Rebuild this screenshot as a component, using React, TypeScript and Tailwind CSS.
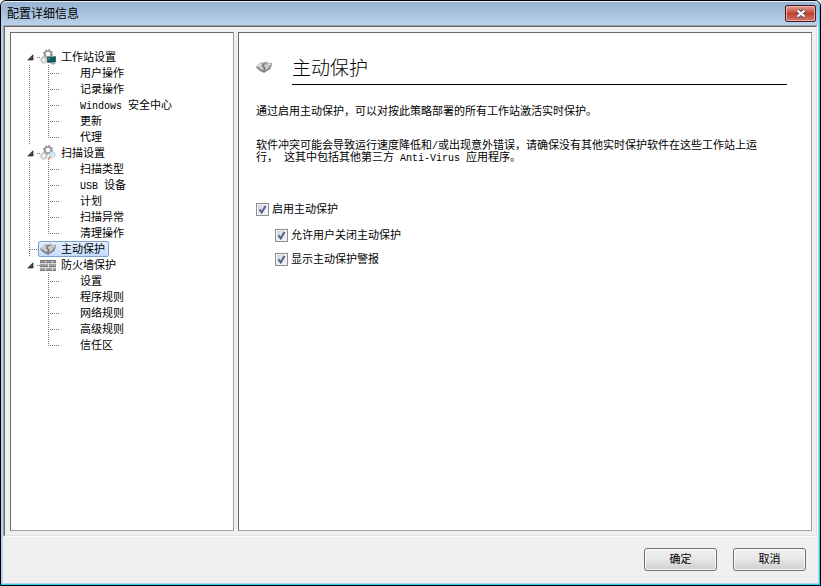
import React from "react";

type Group = {
  label: string;
  icon: React.ReactNode;
  items: string[];
  selected?: boolean;
};

const GearPair = () => (
  <>
    <circle cx="8" cy="5" r="3.2" fill="none" stroke="#9a9a9a" strokeWidth="1.8" />
    <circle cx="8" cy="5" r="4.4" fill="none" stroke="#8a8a8a" strokeWidth="1.2" strokeDasharray="1.7 1.75" />
    <circle cx="3.8" cy="11" r="2.4" fill="#fff" stroke="#c8c8c8" strokeWidth="1.5" />
    <circle cx="3.8" cy="11" r="3.4" fill="none" stroke="#c0c0c0" strokeWidth="1" strokeDasharray="1.3 1.4" />
  </>
);

const WorkstationIcon = () => (
  <svg className="size-4 shrink-0" viewBox="0 0 16 16" aria-hidden="true">
    <GearPair />
    <path d="M7.5 8.5 15.5 7.5V13l-8 .5z" fill="#14595f" stroke="#0c3f46" strokeWidth=".6" />
    <path d="M8 9l4-.6-4 3z" fill="#2e8c8c" />
    <path d="M10 14.2l5-.7.5 1.5-3 .8z" fill="#9aa4a6" />
  </svg>
);

const ScanIcon = () => (
  <svg className="size-4 shrink-0" viewBox="0 0 16 16" aria-hidden="true">
    <GearPair />
    <circle cx="12.3" cy="9.6" r="2.9" fill="#cdeaf8" stroke="#a9cfe4" strokeWidth=".8" />
    <path d="M10.2 11.8 8 14.6" stroke="#c98a5c" strokeWidth="1.6" />
  </svg>
);

const ShieldIcon = () => (
  <svg className="size-4 shrink-0" viewBox="0 0 16 16" aria-hidden="true">
    <path
      d="M0 8.3 3 5.2 6.2 3.6 8 4.2 10 2.8l2.3 1.5L16 4.3l-1 3-1.2 2.8L11 11.5 8.2 13.5 5 12.3 2.5 10.5z"
      fill="#bdbdbd"
      stroke="#8e8e8e"
      strokeWidth=".7"
    />
    <path d="M2 8.5 4.5 11l3.5 1.8 2.5-1.6 3-1.7 1.3-3" fill="none" stroke="#7b7b7b" strokeWidth="1.2" />
    <path d="M2 7.3 4 5.7l2-.8M12 5.3l2.5-.2" fill="none" stroke="#e6e6e6" strokeWidth="1.1" />
    <path d="M9.8 4.8C6.5 4.5 5.5 7 7.8 8c2 .9 1.5 2.7-.8 3" fill="none" stroke="#686868" strokeWidth="1.2" />
    <path d="M11 6c-1.5 0-2 .8-1 1.7s.8 2-.3 2.7M5.3 6.5c-.8 1.2-.6 2.5.5 3.5" fill="none" stroke="#ececec" strokeWidth=".9" />
  </svg>
);

const WallIcon = () => (
  <svg className="size-4 shrink-0" viewBox="0 0 16 16" aria-hidden="true">
    <rect y="3" width="16" height="11" fill="#dcdcdc" />
    <path d="M0 3h5v3H0zM6 3h6v3H6zM13 3h3v3h-3zM0 7h8v3H0zM9 7h7v3H9zM0 11h5v3H0zM6 11h6v3H6zM13 11h3v3h-3z" fill="#a2a2a2" />
    <path d="M0 5.5h5M6 5.5h6M13 5.5h3M0 9.5h8M9 9.5h7M0 13.5h5M6 13.5h6M13 13.5h3M0 3.5h16" stroke="#757575" />
  </svg>
);

const groups: Group[] = [
  {
    label: "工作站设置",
    icon: <WorkstationIcon />,
    items: ["用户操作", "记录操作", "Windows 安全中心", "更新", "代理"],
  },
  {
    label: "扫描设置",
    icon: <ScanIcon />,
    items: ["扫描类型", "USB 设备", "计划", "扫描异常", "清理操作"],
  },
  { label: "主动保护", icon: <ShieldIcon />, items: [], selected: true },
  {
    label: "防火墙保护",
    icon: <WallIcon />,
    items: ["设置", "程序规则", "网络规则", "高级规则", "信任区"],
  },
];

// Latin runs use a half-width face next to the Chinese text
const Mixed = ({ text }: { text: string }) => (
  <>
    {text.split(/([\x20-\x7e]+)/).map((part, i) =>
      i % 2 ? (
        <span key={i} className="font-['Liberation_Mono',monospace] text-[10px] leading-[8px] whitespace-pre-wrap">
          {part}
        </span>
      ) : (
        part
      )
    )}
  </>
);

const dotsDown = "w-px shrink-0 bg-[repeating-linear-gradient(to_bottom,#777_0_1px,transparent_1px_2px)]";
const dotsAcross = "h-px shrink-0 bg-[repeating-linear-gradient(to_right,#777_0_1px,transparent_1px_2px)]";

const TreeGroup = ({ group, last }: { group: Group; last: boolean }) => {
  if (group.selected) {
    return (
      <li className="flex h-4 items-center pl-[17px]">
        <span className={`${dotsDown} h-4`} />
        <span className={`${dotsAcross} w-2`} />
        <a
          href="#protection"
          className="flex h-4 items-center gap-[5px] rounded-xs border border-[#7da2ce] bg-linear-to-b from-[#e4effd] to-[#c4dcfb] pr-[3px] pl-px"
        >
          {group.icon}
          {group.label}
        </a>
      </li>
    );
  }
  return (
    <li>
      <div className="flex h-4 items-center pl-[15px]">
        <button aria-label={group.label} className="w-[7px] shrink-0">
          <svg className="size-[7px]" viewBox="0 0 7 7" aria-hidden="true">
            <path d="M6 .8v5.2H.8z" fill="#444" stroke="#222" strokeWidth=".7" />
          </svg>
        </button>
        <span className={`${dotsAcross} ml-[3px] w-[3px]`} />
        <a href="#group" className="flex items-center gap-[5px]">
          {group.icon}
          {group.label}
        </a>
      </div>
      <ul>
        {group.items.map((item, i) => (
          <li key={item} className="flex h-4 pl-[17px]">
            <span className={last ? "w-px" : `${dotsDown} h-4`} />
            <span className={`${dotsDown} ml-[18px] ${i === group.items.length - 1 ? "h-[9px]" : "h-4"}`} />
            <span className={`${dotsAcross} mt-2 ml-px w-[10px]`} />
            <a href="#item" className="ml-5 leading-4 whitespace-nowrap">
              <Mixed text={item} />
            </a>
          </li>
        ))}
      </ul>
    </li>
  );
};

const Check = ({ label }: { label: string }) => (
  <label className="flex items-center gap-[3px] leading-4">
    <span className="grid size-[13px]">
      <input
        type="checkbox"
        defaultChecked
        className="peer col-start-1 row-start-1 size-[13px] appearance-none border border-[#8e8f8f] bg-linear-to-br from-[#cfd3da] to-[#f6f6f6] shadow-[inset_0_0_0_1px_#f4f4f4]"
      />
      <svg
        className="pointer-events-none invisible col-start-1 row-start-1 size-[13px] peer-checked:visible"
        viewBox="0 0 13 13"
        aria-hidden="true"
      >
        <path d="M3.5 6.3 5.7 9.5 9.5 3" fill="none" stroke="#4a5f97" strokeWidth="1.9" />
      </svg>
    </span>
    {label}
  </label>
);

const DialogButton = ({ children }: { children: React.ReactNode }) => (
  <button className="h-[23px] w-[73px] rounded-[3px] border border-[#707070] bg-linear-to-b from-[#f2f2f2] from-0% via-[#e6e6e6] via-50% to-[#cfcfcf] shadow-[inset_0_0_0_1px_#fafafa]">
    {children}
  </button>
);

const panel = "border border-t-[#696969] border-r-[#a0a0a0] border-b-[#a0a0a0] border-l-[#696969] bg-white";

const App = () => {
  return (
    <div className="flex h-screen flex-col rounded-t-md border border-black bg-[#b9d1ea] font-['Liberation_Sans','Noto_Sans_CJK_SC',sans-serif] text-[11px] text-black">
      <div className="flex min-h-0 grow flex-col rounded-t-md border-t border-r border-b border-t-[#e8f1fa] border-r-[#2fd0ee] border-b-[#2fd0ee]">
        <header className="flex h-[23px] shrink-0 items-start justify-between rounded-t-md bg-linear-to-b from-[#98b3d2] to-[#b9d1ea] pr-[3px] pl-1.5">
          <h1 className="text-xs leading-6">配置详细信息</h1>
          <button
            aria-label="关闭"
            className="mt-[3px] flex h-[17px] w-[31px] items-center justify-center rounded-xs border border-[#431822] bg-linear-to-b from-[#e5a198] from-0% via-[#c0402c] via-50% to-[#d4756a] shadow-[inset_0_0_0_1px_#e8b0a8]"
          >
            <svg className="h-[9px] w-3" viewBox="0 0 12 9" aria-hidden="true">
              <path d="M2.5 1.5 9.5 7.5M9.5 1.5 2.5 7.5" stroke="#535666" strokeWidth="4.2" />
              <path d="M2.5 1.5 9.5 7.5M9.5 1.5 2.5 7.5" stroke="#fff" strokeWidth="2.3" />
            </svg>
          </button>
        </header>

        <div className="mr-px mb-px ml-0.5 flex min-h-0 grow flex-col bg-[#f0f0f0]">
          <div className="flex min-h-0 grow flex-col border border-t-[#a0a0a0] border-r-white border-b-white border-l-[#a0a0a0]">
            <main className="flex min-h-0 grow gap-1 border border-t-[#696969] border-r-[#e3e3e3] border-b-[#e3e3e3] border-l-[#696969] p-[5px] pr-1 pb-1">
              <nav className={`${panel} w-[224px] shrink-0 overflow-hidden py-4 pl-px`}>
                <ul>
                  {groups.map((group, i) => (
                    <TreeGroup key={group.label} group={group} last={i === groups.length - 1} />
                  ))}
                </ul>
              </nav>

              <section className={`${panel} min-w-0 grow overflow-hidden pt-4 pr-6 pl-[17px]`}>
                <div className="flex items-center gap-5">
                  <ShieldIcon />
                  <h2 className="grow border-b border-black pt-1.5 pb-0.5 text-[19px] leading-[27px] font-light">
                    主动保护
                  </h2>
                </div>
                <p className="mt-5 leading-3">通过启用主动保护，可以对按此策略部署的所有工作站激活实时保护。</p>
                <p className="mt-[22px] max-w-[506px] leading-3">
                  <Mixed text="软件冲突可能会导致运行速度降低和/或出现意外错误，请确保没有其他实时保护软件在这些工作站上运行， 这其中包括其他第三方 Anti-Virus 应用程序。" />
                </p>
                <div className="mt-[38px]">
                  <Check label="启用主动保护" />
                  <div className="mt-2.5 flex flex-col gap-2 pl-[19px]">
                    <Check label="允许用户关闭主动保护" />
                    <Check label="显示主动保护警报" />
                  </div>
                </div>
              </section>
            </main>
          </div>

          <footer className="flex shrink-0 justify-end gap-4 px-3 pt-[11px] pb-3">
            <DialogButton>确定</DialogButton>
            <DialogButton>取消</DialogButton>
          </footer>
        </div>
      </div>
    </div>
  );
};

export default App;
